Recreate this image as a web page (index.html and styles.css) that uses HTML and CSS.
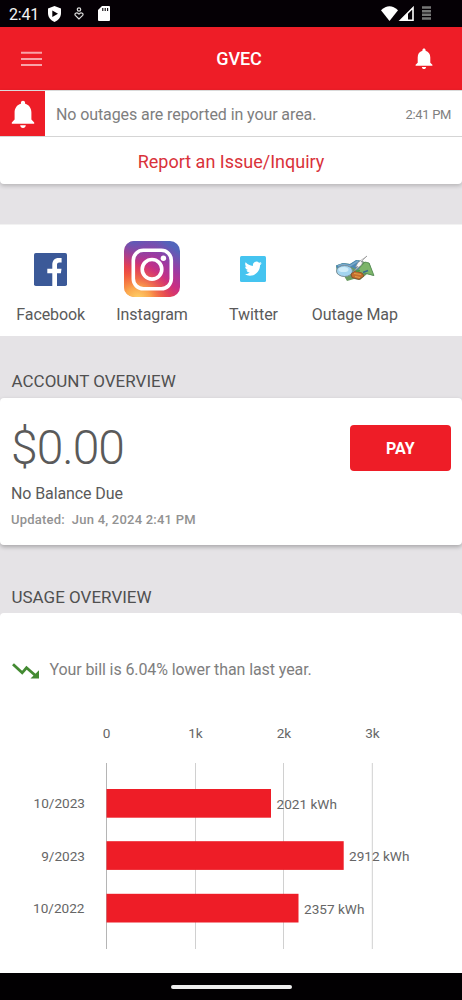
FILE: index.html
```html
<!DOCTYPE html>
<html lang="en">
<head>
<meta charset="utf-8">
<meta name="viewport" content="width=device-width">
<title>GVEC</title>
<link rel="stylesheet" href="styles.css">
</head>
<body>
<svg class="defs" width="0" height="0" aria-hidden="true">
  <symbol id="bell" viewBox="4 2 16 20"><path d="M12 22c1.1 0 2-.9 2-2h-4c0 1.1.9 2 2 2zm6-6v-5c0-3.07-1.63-5.64-4.5-6.32V4c0-.83-.67-1.5-1.5-1.5s-1.500.67-1.500 1.500v.68C7.640 5.360 6 7.920 6 11v5l-2 2v1h16v-1z" fill="#fff"/></symbol>
</svg>
<div class="status">
  <span class="clock">2:41</span>
  <svg class="shield" width="13" height="16" viewBox="0 0 13 16"><path d="M6.500 0 13 2.600V7c0 4-2.600 7.500-6.500 9C2.600 14.500 0 11 0 7V2.600z" fill="#fff"/><path d="M4.300 4.400 10 7.700 4.300 11z" fill="#050005"/></svg>
  <svg class="care" width="10" height="13" viewBox="0 0 10 13" fill="none" stroke="#ddd" stroke-width="1.200"><circle cx="5" cy="2.500" r="1.700"/><path d="M5 12 1.300 8.400C.1 7 2.300 4.500 5 7.200 7.700 4.500 9.900 7 8.700 8.400z"/></svg>
  <svg class="sd" width="12" height="15" viewBox="0 0 12 15"><path d="M4 0h7q1 0 1 1v13q0 1-1 1H1q-1 0-1-1V4z" fill="#fff"/><path d="M4.800 2v3M7.200 2v3M9.600 2v3" stroke="#050005" stroke-width="1.100"/></svg>
  <svg class="radio" width="51" height="16" viewBox="0 0 51 16"><path d="M0 4.200Q8.500-3.600 17 4.200L8.500 15z" fill="#fff"/><path d="M19.500 14.200 32 1.800v12.400z" fill="none" stroke="#fff" stroke-width="1.600"/><path d="M19 15 27 7v8z" fill="#fff"/><path d="M41 1.500h9M41 5.200h9M41 8.800h9M41 12.500h9" stroke="#777" stroke-width="2.600"/></svg>
</div>
<header class="appbar">
  <svg width="21" height="16" viewBox="0 0 21 16"><path d="M0 1.700h21M0 8h21M0 14h21" stroke="#f9a3a8" stroke-width="2"/></svg>
  <h1>GVEC</h1>
  <svg class="bell-small" width="18" height="21" preserveAspectRatio="none"><use href="#bell"/></svg>
</header>
<section class="notice">
  <div class="alert">
    <div class="alert-icon"><svg width="24" height="28"><use href="#bell"/></svg></div>
    <span class="alert-text">No outages are reported in your area.</span>
    <span class="alert-time">2:41 PM</span>
  </div>
  <div class="report"><span>Report an Issue/Inquiry</span></div>
</section>
<nav class="shortcuts">
  <a class="shortcut"><span class="pic"><svg width="33" height="33" viewBox="0 0 33 33"><rect width="33" height="33" rx="1.800" fill="#3b5998"/><path d="M18.300 33V20.300h-5v-4.600h5v-3.900C18.300 7.500 20.700 5 24.600 5h3v4.500h-2.300c-1.800 0-2.300.9-2.300 2.600v3.600h4.500l-.6 4.600H23V33z" fill="#fff"/></svg></span><span>Facebook</span></a>
  <a class="shortcut"><span class="pic"><svg width="56" height="56" viewBox="0 0 56 56">
    <defs><linearGradient id="ig" x1="0" y1="1" x2=".75" y2="0"><stop offset="0" stop-color="#f58a35"/><stop offset=".28" stop-color="#ef493d"/><stop offset=".55" stop-color="#ca2e83"/><stop offset=".75" stop-color="#9c3aa2"/><stop offset="1" stop-color="#5265bb"/></linearGradient><radialGradient id="warm" cx=".25" cy="1.040" r=".65"><stop offset="0" stop-color="#ffd66b"/><stop offset=".35" stop-color="#fdb653" stop-opacity=".8"/><stop offset="1" stop-color="#f04b3b" stop-opacity="0"/></radialGradient><radialGradient id="cool" cx=".15" cy="-.1" r=".55"><stop offset="0" stop-color="#4569c0"/><stop offset="1" stop-color="#6a53b4" stop-opacity="0"/></radialGradient></defs>
    <rect width="56" height="56" rx="10" fill="url(#ig)"/><rect width="56" height="56" rx="10" fill="url(#cool)"/><rect width="56" height="56" rx="10" fill="url(#warm)"/>
    <g fill="none" stroke="#fff" stroke-width="3.600"><rect x="9.300" y="9.300" width="38" height="38.500" rx="10"/><circle cx="28" cy="28.300" r="9.800"/></g><circle cx="39.400" cy="17.300" r="2.700" fill="#fff"/></svg></span><span>Instagram</span></a>
  <a class="shortcut"><span class="pic"><svg width="26" height="26" viewBox="0 0 26 26"><rect width="26" height="26" rx="1.500" fill="#45c4f0"/><path transform="translate(4.500 4) scale(.72)" d="M23.950 4.570a10 10 0 0 1-2.820.77 4.960 4.960 0 0 0 2.160-2.720c-.95.560-2 .960-3.130 1.180a4.920 4.920 0 0 0-8.380 4.480C7.690 8.100 4.070 6.130 1.640 3.160a4.800 4.800 0 0 0-.670 2.480c0 1.710.87 3.210 2.190 4.100a4.900 4.900 0 0 1-2.230-.62v.06a4.920 4.920 0 0 0 3.950 4.830 5 5 0 0 1-2.210.08 4.940 4.940 0 0 0 4.600 3.420A9.870 9.870 0 0 1 0 19.540a13.990 13.990 0 0 0 7.550 2.210c9.050 0 14-7.500 14-13.980 0-.210 0-.420-.02-.630a9.940 9.940 0 0 0 2.460-2.550z" fill="#fff"/></svg></span><span>Twitter</span></a>
  <a class="shortcut"><span class="pic"><svg width="40" height="28" viewBox="0 0 40 28">
    <path d="M1 10.500 8 8l7 1 7-4 8 2 4.500 1L39 21l-7-2-7 6-6-1-7 2-3-5-7-2z" fill="#6a9c62"/>
    <path d="M30 7l4 1 5 12.500-8-2-5 1-4-4z" fill="#7db56a" stroke="#4d8450" stroke-width=".7"/>
    <path d="M1 10.500 8 8l7 1 6-4 7 1-5 9-7-3-14 2z" fill="#4c88b5"/>
    <path d="M3 11q5-3 12 0l8-5" fill="none" stroke="#79a9c9" stroke-width="1.500"/>
    <ellipse cx="9.500" cy="16" rx="8" ry="5.500" fill="#a3d5f0" stroke="#7d8f9b" stroke-width="1"/><ellipse cx="8.500" cy="14.500" rx="5" ry="2.600" fill="#cfecf9"/>
    <path d="m16 19 4-3 7 2 2 3-5 3.500-7-2z" fill="#c56f2f" stroke="#7e4424" stroke-width=".7"/><path d="m19 18.500 7 1M20 21.500l5 1" stroke="#e4a047" stroke-width="1.200"/><path d="m21 16.500 4-1" stroke="#4c9440" stroke-width="1.500"/>
    <path d="m28 17.500 5-2" stroke="#396b91" stroke-width="1.800"/>
    <path d="M32 1 23 7.500 20.500 12l2.500-.5L18 17l8.500-7L28 6.500l-2 .5z" fill="#f8f8f8" stroke="#888" stroke-width=".6"/></svg></span><span>Outage Map</span></a>
</nav>
<h2 class="account-title">ACCOUNT OVERVIEW</h2>
<section class="account">
  <div class="balance">
    <div class="amount">$0.00</div>
    <div class="due">No Balance Due</div>
    <div class="updated">Updated: &nbsp;Jun 4, 2024 2:41 PM</div>
  </div>
  <button class="pay">PAY</button>
</section>
<h2 class="usage-title">USAGE OVERVIEW</h2>
<section class="usage">
  <div class="trend"><svg width="27" height="16" viewBox="0 0 27 16"><path d="m1 1.200 9.200 8.600 4.300-5L24 13" fill="none" stroke="#438a32" stroke-width="2.800"/><path d="M18.500 15.500H27V7.300z" fill="#438a32"/></svg><span>Your bill is 6.04% lower than last year.</span></div>
  <svg class="chart" width="462" height="240" viewBox="0 0 462 240">
    <g class="axis"><text x="106.500" y="24.500">0</text><text x="195.500" y="24.500">1k</text><text x="284" y="24.500">2k</text><text x="372.500" y="24.500">3k</text></g>
    <path d="M195.500 50v186M283.500 50v186M372.300 50v186" stroke="#d0d0d0"/><path d="M106.500 50v186" stroke="#b5b5b5"/>
    <g class="bars"><rect x="106.500" y="76" width="164.500" height="28.700"/><rect x="106.500" y="128.200" width="237.200" height="28.700"/><rect x="106.500" y="180.800" width="192" height="28.700"/></g>
    <g class="months"><text x="85" y="95.300">10/2023</text><text x="85" y="147.800">9/2023</text><text x="84.500" y="200.200">10/2022</text></g>
    <g class="values"><text x="276.500" y="95.800">2021 kWh</text><text x="349" y="148.100">2912 kWh</text><text x="304" y="200.600">2357 kWh</text></g>
  </svg>
</section>
<footer class="home"><i></i></footer>
</body>
</html>
```
FILE: styles.css
```css
* { box-sizing: border-box; }
body { margin: 0; width: 462px; height: 1000px; overflow: hidden; background: #e5e3e6; color: #5a5a5a; font-family: Roboto, sans-serif; display: flex; flex-direction: column; }
svg { display: block; flex: none; }
.defs { position: absolute; }
.status { flex: none; height: 27px; background: #050005; display: flex; align-items: center; padding: 0 30px 0 9px; }
.clock { color: #f4f4f4; font-size: 16px; width: 39px; line-height: 27px; padding-top: 1px; letter-spacing: -.2px; }
.care { margin-left: 13px; }
.sd { margin-left: 14px; }
.radio { margin-left: auto; }
.appbar { flex: none; height: 63px; background: #ee1d27; display: flex; align-items: center; justify-content: space-between; padding: 0 29px 0 21px; }
.appbar h1 { margin: 1px 0 0 21px; color: #fff; font-size: 18px; font-weight: 500; line-height: 24px; letter-spacing: -.1px; }
.notice { flex: none; height: 94px; background: #fff; border-top: 1px solid #dadada; border-radius: 0 0 4px 4px; box-shadow: 0 2px 4px #0003; }
.alert { height: 46px; display: flex; align-items: center; border-bottom: 1px solid #d5d5d5; padding-right: 11px; }
.alert-icon { width: 45px; height: 45px; background: #ee1d27; display: grid; place-items: center; }
.alert-text { margin-left: 11px; color: #7e7e7e; font-size: 16px; line-height: 24px; padding-top: 2px; letter-spacing: -.095px; }
.alert-time { margin-left: auto; color: #808080; font-size: 13px; padding-top: 1px; letter-spacing: -.35px; }
.report { height: 47px; display: grid; place-items: center; color: #d9323a; font-size: 18px; padding-top: 1px; }
.shortcuts { flex: none; margin-top: 40px; height: 111.500px; background: #fff; border-top: 1px solid #f2f2f2; display: flex; padding-top: 16px; }
.shortcut { width: 101.400px; display: flex; flex-direction: column; align-items: center; font-size: 16px; line-height: 24px; letter-spacing: -.08px; white-space: nowrap; }
.pic { height: 56px; display: grid; place-items: center; margin-bottom: 6px; }
h2 { flex: none; margin: 0; padding-left: 11.500px; font-size: 17px; line-height: 24px; font-weight: 400; color: #505050; }
.account-title { height: 62.500px; padding-top: 33px; }
.account { flex: none; height: 147px; background: #fff; border-radius: 4px; box-shadow: 0 2px 4px #0004; display: flex; justify-content: space-between; padding: 0 11px; }
.amount { margin-top: 21px; font-size: 48px; line-height: 58px; font-weight: 300; letter-spacing: -1px; }
.due { margin-top: 5px; font-size: 16px; line-height: 24px; letter-spacing: -.1px; }
.updated { margin-top: 3.500px; color: #929292; font-size: 13px; line-height: 20px; font-weight: 500; letter-spacing: .22px; }
.pay { margin: 27px 0 0; padding: 1px 0 0; width: 101.500px; height: 46px; border: 0; border-radius: 4px; background: #ee1d27; color: #fff; font: 700 16px Roboto, sans-serif; }
.usage-title { height: 68px; padding-top: 40px; }
.usage { flex: none; height: 360px; background: #fff; border-radius: 4px 4px 0 0; padding-top: 44px; }
.trend { display: flex; align-items: center; height: 24px; padding-left: 11.500px; gap: 11px; font-size: 16px; letter-spacing: -.095px; color: #7e7e7e; }
.trend svg { margin-top: 4px; }
.chart { margin-top: 32px; fill: #666; font: 13.600px Roboto, sans-serif; }
.axis { text-anchor: middle; }
.months { text-anchor: end; }
.bars { fill: #ee1d27; }
.home { flex: none; height: 27px; background: #020002; display: grid; place-items: center; }
.home i { width: 121px; height: 4px; border-radius: 2px; background: #eee; }
```
